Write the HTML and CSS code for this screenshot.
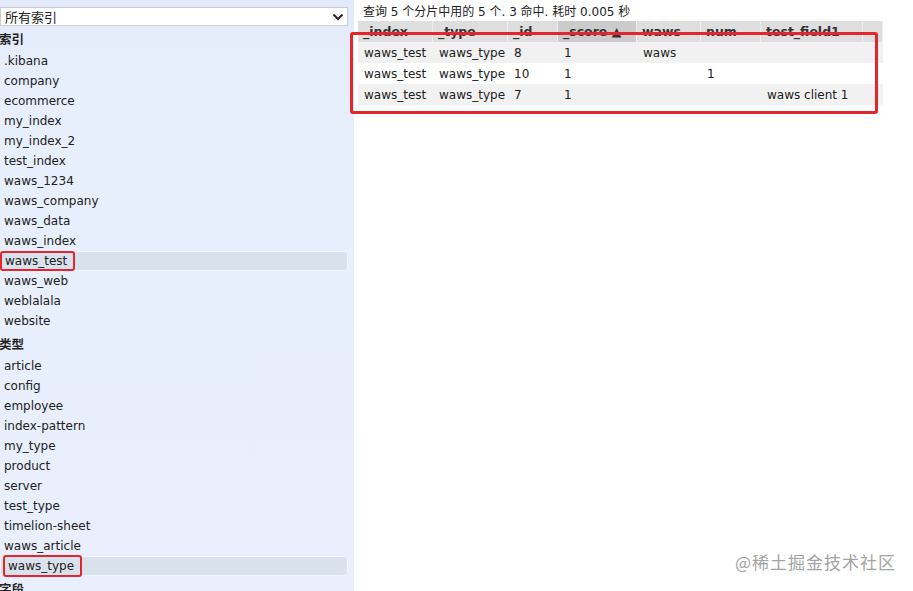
FILE: index.html
```html
<!DOCTYPE html>
<html lang="zh-CN">
<head>
    <meta charset="UTF-8">
    <meta name="viewport" content="width=device-width, initial-scale=1.0">
    <title>Browser</title>
    <link rel="stylesheet" href="styles.css">
</head>
<body>
    <div class="page">
        <div class="sidebar">
            <div class="select">
                <span>所有索引</span>
                <svg class="chevron" width="12" height="8" viewBox="0 0 12 8"><path d="M1.5 1.5 L6 6 L10.5 1.5" fill="none" stroke="#222" stroke-width="2"/></svg>
            </div>

            <div class="group-title">索引</div>
            <div class="item">.kibana</div>
            <div class="item">company</div>
            <div class="item">ecommerce</div>
            <div class="item">my_index</div>
            <div class="item">my_index_2</div>
            <div class="item">test_index</div>
            <div class="item">waws_1234</div>
            <div class="item">waws_company</div>
            <div class="item">waws_data</div>
            <div class="item">waws_index</div>
            <div class="item selected"><span class="mark">waws_test</span></div>
            <div class="item">waws_web</div>
            <div class="item">weblalala</div>
            <div class="item">website</div>

            <div class="group-title">类型</div>
            <div class="item">article</div>
            <div class="item">config</div>
            <div class="item">employee</div>
            <div class="item">index-pattern</div>
            <div class="item">my_type</div>
            <div class="item">product</div>
            <div class="item">server</div>
            <div class="item">test_type</div>
            <div class="item">timelion-sheet</div>
            <div class="item">waws_article</div>
            <div class="item selected"><span class="mark mark-2">waws_type</span></div>

            <div class="group-title">字段</div>
        </div>

        <div class="main">
            <div class="summary">查询 5 个分片中用的 5 个. 3 命中. 耗时 0.005 秒</div>
            <div class="results">
                <div class="head">
                    <div class="th">_index</div>
                    <div class="th">_type</div>
                    <div class="th">_id</div>
                    <div class="th sorted">_score ▲</div>
                    <div class="th">waws</div>
                    <div class="th">num</div>
                    <div class="th">test_field1</div>
                    <div class="th"></div>
                </div>
                <div class="row odd">
                    <div>waws_test</div><div>waws_type</div><div>8</div><div>1</div><div>waws</div><div></div><div></div>
                </div>
                <div class="row">
                    <div>waws_test</div><div>waws_type</div><div>10</div><div>1</div><div></div><div>1</div><div></div>
                </div>
                <div class="row odd">
                    <div>waws_test</div><div>waws_type</div><div>7</div><div>1</div><div></div><div></div><div>waws client 1</div>
                </div>
                <div class="red-box"></div>
            </div>
        </div>
    </div>
    <div class="watermark">@稀土掘金技术社区</div>
</body>
</html>
```

FILE: styles.css
```css
html, body {
    margin: 0;
    height: 100%;
    overflow: hidden;
}

body {
    font-family: "DejaVu Sans", Verdana, "Noto Sans CJK SC", sans-serif;
    font-size: 12px;
    color: #222;
    background: #fff;
}

.page {
    display: flex;
    height: 100%;
}

.sidebar {
    width: 354px;
    flex-shrink: 0;
    background: linear-gradient(180deg, #e3ebfa 0, #e8effc 120px, #e9effc 100%);
    box-sizing: border-box;
    padding-top: 7px;
}

.select {
    width: 348px;
    height: 19px;
    box-sizing: border-box;
    background: #fff;
    border: 1px solid #c8ccd4;
    display: flex;
    align-items: center;
    justify-content: space-between;
    padding: 0 3px 0 4px;
    font-size: 13px;
    font-family: "Noto Sans CJK SC", sans-serif;
}

.chevron {
    display: block;
}

.group-title {
    height: 25px;
    line-height: 25px;
    font-weight: bold;
    font-family: "Noto Sans CJK SC", sans-serif;
    font-size: 12.5px;
    text-indent: -1px;
}

.item {
    height: 20px;
    line-height: 20px;
    padding-left: 4px;
    width: 348px;
    box-sizing: border-box;
    white-space: nowrap;
}

.item.selected {
    background: #d9e1ed;
    border: 1px solid #f2f5fb;
    border-radius: 4px;
    padding-left: 0;
    line-height: 18px;
    display: flex;
    align-items: center;
}

.mark {
    display: inline-block;
    border: 2px solid #e3262b;
    border-radius: 3px;
    padding: 0 6px 0 3px;
    line-height: 16px;
    margin-left: -1px;
}

.mark-2 {
    margin-left: 2px;
    line-height: 18px;
}

.main {
    flex: 1;
    padding-left: 4px;
}

.summary {
    height: 21px;
    line-height: 24px;
    padding-left: 5px;
    font-size: 12px;
    white-space: nowrap;
}

.results {
    position: relative;
    width: 525px;
}

.head {
    display: grid;
    grid-template-columns: 75px 75px 50px 79px 64px 60px 102px 20px;
    height: 21px;
}

.th {
    background: #dedede;
    border-right: 1px solid #efefef;
    font-weight: bold;
    line-height: 22px;
    padding-left: 5px;
    white-space: nowrap;
    overflow: hidden;
    color: #333;
    font-size: 12.5px;
}

.th.sorted {
    background: #cbcbcb;
}

.row {
    display: grid;
    grid-template-columns: 75px 75px 50px 79px 64px 60px 106px;
    height: 21px;
    line-height: 23px;
}

.row > div {
    padding-left: 6px;
    white-space: nowrap;
}

.row.odd {
    background: #f1f1f1;
}

.red-box {
    position: absolute;
    left: -8px;
    top: 11px;
    width: 522px;
    height: 76px;
    border: 3px solid #e3262b;
    border-radius: 3px;
}

.watermark {
    position: absolute;
    left: 735px;
    top: 549px;
    font-family: "Noto Sans CJK SC", sans-serif;
    font-size: 17px;
    color: #a3a3a3;
    letter-spacing: 1px;
}
```
